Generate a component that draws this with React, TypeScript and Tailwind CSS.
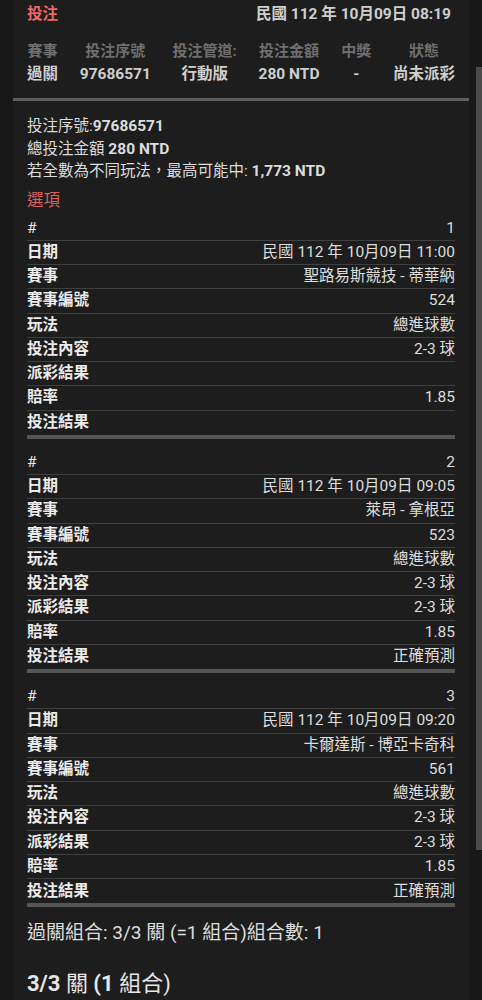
import React from "react";

type Row = [string, string];

const blocks: Row[][] = [
  [
    ["#", "1"],
    ["日期", "民國 112 年 10月09日 11:00"],
    ["賽事", "聖路易斯競技 - 蒂華納"],
    ["賽事編號", "524"],
    ["玩法", "總進球數"],
    ["投注內容", "2-3 球"],
    ["派彩結果", ""],
    ["賠率", "1.85"],
    ["投注結果", ""],
  ],
  [
    ["#", "2"],
    ["日期", "民國 112 年 10月09日 09:05"],
    ["賽事", "萊昂 - 拿根亞"],
    ["賽事編號", "523"],
    ["玩法", "總進球數"],
    ["投注內容", "2-3 球"],
    ["派彩結果", "2-3 球"],
    ["賠率", "1.85"],
    ["投注結果", "正確預測"],
  ],
  [
    ["#", "3"],
    ["日期", "民國 112 年 10月09日 09:20"],
    ["賽事", "卡爾達斯 - 博亞卡奇科"],
    ["賽事編號", "561"],
    ["玩法", "總進球數"],
    ["投注內容", "2-3 球"],
    ["派彩結果", "2-3 球"],
    ["賠率", "1.85"],
    ["投注結果", "正確預測"],
  ],
];

const cols: Row[] = [
  ["賽事", "過關"],
  ["投注序號", "97686571"],
  ["投注管道:", "行動版"],
  ["投注金額", "280 NTD"],
  ["中獎", "-"],
  ["狀態", "尚未派彩"],
];

export default function App() {
  return (
    <div
      className="relative w-[482px] h-[1000px] overflow-hidden bg-[#181818] text-[#dedede]"
      style={{ fontFamily: 'Roboto, "Noto Sans CJK TC", "Noto Sans CJK SC", sans-serif' }}
    >
      <div className="mx-[13px] w-[456px] h-full bg-[#1d1d1d]">
        {/* header */}
        <div className="flex items-center justify-between pl-[14px] pr-[18px] h-[29px] pt-[1px]">
          <span className="text-[15.5px] font-bold text-[#f06767]">投注</span>
          <span className="text-[15.5px] font-bold text-[#cfcfcf]">民國 112 年 10月09日 08:19</span>
        </div>
        <div className="flex justify-between pl-[14px] pr-[14px] pt-[11px]">
          {cols.map(([l, v]) => (
            <div key={l} className="flex flex-col items-center">
              <span className="text-[15px] font-bold text-[#6f6f6f] leading-[23px]">{l}</span>
              <span className="text-[15.5px] font-bold text-[#cfcfcf] leading-[23px]">{v}</span>
            </div>
          ))}
        </div>
        <div className="mt-[12px] h-[3px] bg-[#5e5e5e]" />

        {/* body */}
        <div className="px-[14px] pt-[14px]">
          <div className="text-[15.5px] leading-[22.5px] text-[#dcdcdc]">
            <div>
              投注序號:<span className="font-bold">97686571</span>
            </div>
            <div>
              總投注金額 <span className="font-bold">280 NTD</span>
            </div>
            <div>
              若全數為不同玩法，最高可能中: <span className="font-bold">1,773 NTD</span>
            </div>
          </div>
          <div className="mt-[6px] text-[16.5px] leading-[24px] text-[#d95f5f]">選項</div>

          <div className="mt-[4px]">
            {blocks.map((rows, bi) => (
              <div key={bi} className="mb-[12px]">
                {rows.map(([l, v], i) => (
                  <div
                    key={l}
                    className={`flex items-center justify-between h-[24.25px] text-[15.5px] ${
                      i < rows.length - 1 ? "border-b border-[#3f3f3f]" : ""
                    }`}
                  >
                    <span className={l === "#" ? "text-[#e6e6e6]" : "font-bold text-[#ececec]"}>{l}</span>
                    <span className="text-[#dedede]">{v}</span>
                  </div>
                ))}
                <div className="h-[4px] bg-[#555555]" />
              </div>
            ))}
          </div>

          <div className="mt-[8px] text-[19px] leading-[28px] text-[#dedede]">
            過關組合: 3/3 關 (=1 組合)組合數: 1
          </div>
          <div className="mt-[21px] text-[22px] leading-[32px] text-[#e6e6e6]">
            <span className="font-bold">3/3</span> 關 <span className="font-bold">(1</span> 組合)
          </div>
        </div>
      </div>

      {/* scrollbar */}
      <div className="absolute right-0 top-[67px] w-[6px] h-[783px] bg-[#4a4a4a]" />
    </div>
  );
}
